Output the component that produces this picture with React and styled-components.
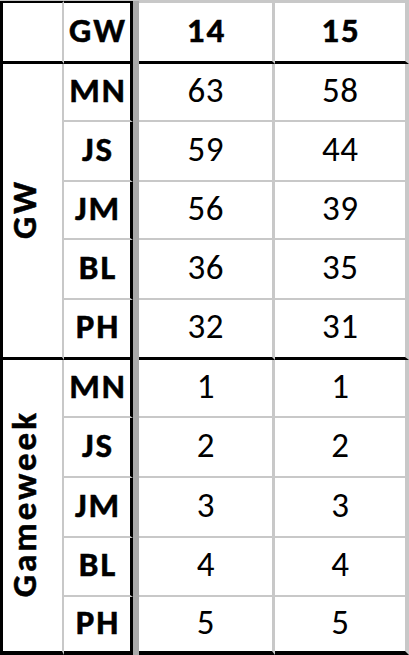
import React from "react";
import styled, { createGlobalStyle } from "styled-components";

const GRID = "#c8c8c8";
const FREEZE = "#aaaaaa";
const INK = "#000000";

const Global = createGlobalStyle`
  html, body { margin: 0; padding: 0; background: #ffffff; }
  body { font-family: "Carlito", "Lato", "Open Sans", sans-serif; color: ${INK}; }
`;

const Sheet = styled.div`
  display: grid;
  width: 409px;
  height: 655px;
  box-sizing: border-box;
  border-top: 1px solid ${GRID};
  grid-template-columns: 64px 69px 6px 136px 134px;
  grid-template-rows: 63px 58px 60px 58px 60px 60px 58px 60px 60px 59px 58px;
  overflow: hidden;
`;

const FreezeLine = styled.div`
  grid-column: 3;
  grid-row: 1 / -1;
  background: ${FREEZE};
`;

const Cell = styled.div`
  box-sizing: border-box;
  display: flex;
  align-items: center;
  justify-content: center;
  padding-bottom: 4px;
  padding-left: ${(p) => (p.$bold ? "2px" : "0.5px")};
  font-size: 35px;
  font-weight: ${(p) => (p.$bold ? 700 : 400)};
  letter-spacing: ${(p) => (p.$bold ? "2px" : "0.5px")};
  -webkit-text-stroke: ${(p) => (p.$bold ? "0.5px" : "0")} ${INK};
  line-height: 1;
  border-bottom: ${(p) => p.$bottom || `2px solid ${GRID}`};
  white-space: nowrap;
`;

const Corner = styled(Cell)`
  border-left: 3px solid ${INK};
  border-top: 2px solid ${INK};
  border-right: 2px solid ${GRID};
  border-bottom: 3px solid ${INK};
`;

const HeadName = styled(Cell)`
  border-top: 2px solid ${INK};
  border-right: 3px solid ${INK};
  border-bottom: 3px solid ${INK};
`;

const HeadValue = styled(Cell)`
  border-top: 2px solid ${GRID};
  border-right: ${(p) => (p.$last ? 4 : 3)}px solid ${GRID};
  border-bottom: 3px solid ${INK};
`;

const GroupCell = styled(Cell)`
  grid-row: span 5;
  border-left: 3px solid ${INK};
  border-right: 2px solid ${GRID};
  padding-bottom: 0;
  padding-left: 0;
  padding-right: 16px;
`;

const GroupText = styled.span`
  writing-mode: vertical-rl;
  transform: rotate(180deg);
  font-weight: 700;
  letter-spacing: 3px;
  padding-top: 3px;
  -webkit-text-stroke: 0.5px ${INK};
`;

const NameCell = styled(Cell)`
  border-right: 3px solid ${INK};
`;

const ValueCell = styled(Cell)`
  border-right: ${(p) => (p.$last ? 4 : 3)}px solid ${GRID};
`;

const groups = [
  {
    label: "GW",
    rows: [
      ["MN", 63, 58],
      ["JS", 59, 44],
      ["JM", 56, 39],
      ["BL", 36, 35],
      ["PH", 32, 31],
    ],
  },
  {
    label: "Gameweek",
    rows: [
      ["MN", 1, 1],
      ["JS", 2, 2],
      ["JM", 3, 3],
      ["BL", 4, 4],
      ["PH", 5, 5],
    ],
  },
];

export default function App() {
  return (
    <>
      <Global />
      <Sheet>
        <FreezeLine />
        <Corner />
        <HeadName $bold>GW</HeadName>
        <HeadValue $bold>14</HeadValue>
        <HeadValue $bold $last>15</HeadValue>
        {groups.map((g, gi) => {
          const groupBottom = `${gi === groups.length - 1 ? 4 : 3}px solid ${INK}`;
          return (
            <React.Fragment key={g.label}>
              <GroupCell $bottom={groupBottom}>
                <GroupText>{g.label}</GroupText>
              </GroupCell>
              {g.rows.map((r, ri) => {
                const bottom = ri === g.rows.length - 1 ? groupBottom : undefined;
                return (
                  <React.Fragment key={r[0]}>
                    <NameCell $bold $bottom={bottom}>{r[0]}</NameCell>
                    <ValueCell $bottom={bottom}>{r[1]}</ValueCell>
                    <ValueCell $bottom={bottom} $last>{r[2]}</ValueCell>
                  </React.Fragment>
                );
              })}
            </React.Fragment>
          );
        })}
      </Sheet>
    </>
  );
}
